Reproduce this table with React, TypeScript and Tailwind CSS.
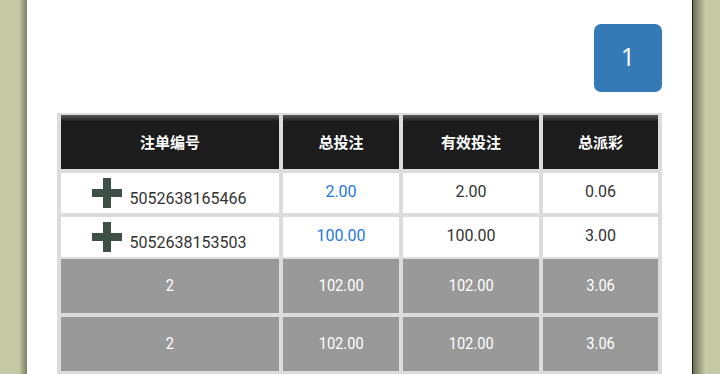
const rows = [
  { id: "5052638165466", total: "2.00", valid: "2.00", payout: "0.06" },
  { id: "5052638153503", total: "100.00", valid: "100.00", payout: "3.00" },
];

const sums = [
  { count: "2", total: "102.00", valid: "102.00", payout: "3.06" },
  { count: "2", total: "102.00", valid: "102.00", payout: "3.06" },
];

const cols = "grid grid-cols-[218px_116px_136px_115px] gap-x-[4px]";

function PlusIcon() {
  return (
    <svg width="30" height="30" viewBox="0 0 30 30" className="shrink-0">
      <path d="M11 0h8v11h11v8H19v11h-8V19H0v-8h11z" fill="#3e4f45" />
    </svg>
  );
}

function Cond({ children }: { children: React.ReactNode }) {
  return <span className="inline-block scale-x-[0.86]">{children}</span>;
}

export default function App() {
  return (
    <div className="flex h-[374px] w-[720px] overflow-hidden bg-[#c5c9a5] font-['Roboto',sans-serif]">
      <div className="w-[27px] shrink-0 bg-gradient-to-r from-[#c5c9a5] from-70% to-[#7d7f62]" />
      <div className="w-[665px] shrink-0 bg-white px-[30px] pt-[24px]">
        <div className="flex justify-end">
          <button className="flex h-[68px] w-[68px] items-center justify-center rounded-[7px] bg-[#337ab7] pb-[2px] font-['Open_Sans',sans-serif] text-[25px] text-white">
            1
          </button>
        </div>
        <div className="mt-[21px] flex flex-col bg-[#dcdcdc] px-[4px] pt-[2px] pb-[3px]">
          <div className={`${cols} h-[54px]`}>
            {["注单编号", "总投注", "有效投注", "总派彩"].map((h) => (
              <div
                key={h}
                className="flex items-center justify-center bg-gradient-to-b from-[#5a5a5a] via-[#1c1c1c] via-[12%] to-[#1c1c1c] font-['Noto_Sans_CJK_SC',sans-serif] text-[15px] font-bold text-white"
              >
                {h}
              </div>
            ))}
          </div>
          {rows.map((r) => (
            <div key={r.id} className={`${cols} mt-[4px] h-[40px] text-[16px] text-[#333]`}>
              <div className="flex items-center justify-center gap-[8px] bg-white pr-[2px]">
                <PlusIcon />
                <span className="mt-[12px]">{r.id}</span>
              </div>
              <div className="flex items-center justify-center bg-white pb-[2px] text-[#1e78e4]">{r.total}</div>
              <div className="flex items-center justify-center bg-white pb-[2px]">{r.valid}</div>
              <div className="flex items-center justify-center bg-white pb-[2px]">{r.payout}</div>
            </div>
          ))}
          {sums.map((s, i) => (
            <div
              key={i}
              className={`${cols} ${i === 0 ? "mt-[2px]" : "mt-[4px]"} h-[54px] text-[17px] text-white`}
            >
              <div className="flex items-center justify-center bg-[#999999]"><Cond>{s.count}</Cond></div>
              <div className="flex items-center justify-center bg-[#999999]"><Cond>{s.total}</Cond></div>
              <div className="flex items-center justify-center bg-[#999999]"><Cond>{s.valid}</Cond></div>
              <div className="flex items-center justify-center bg-[#999999]"><Cond>{s.payout}</Cond></div>
            </div>
          ))}
        </div>
      </div>
      <div className="w-[1px] shrink-0 bg-[#222]" />
      <div className="w-[27px] shrink-0 bg-gradient-to-r from-[#6f7058] to-[#c5c9a5] to-45%" />
    </div>
  );
}
